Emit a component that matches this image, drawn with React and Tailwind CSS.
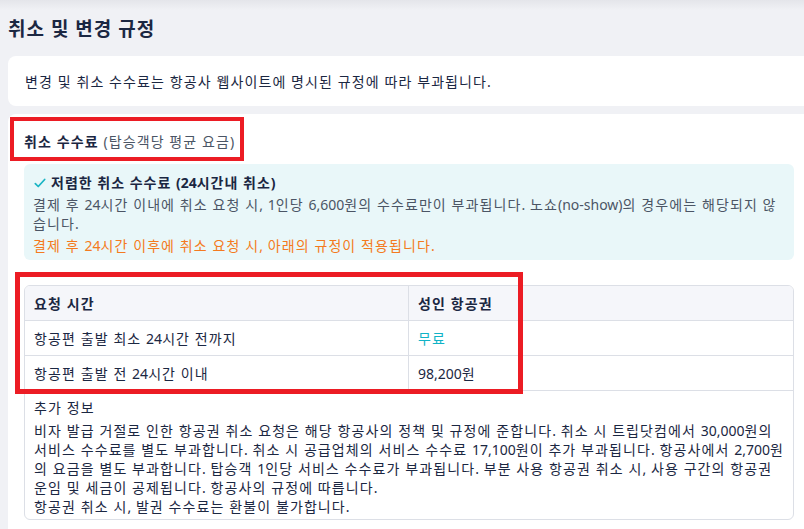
const font = { fontFamily: '"Noto Sans", "Noto Sans CJK KR", sans-serif' };

// 한글만 자간을 넓히고, 숫자/영문은 기본 자간 유지
function T({ children }) {
  const parts = children.split(/([0-9A-Za-z,().\-]+)/);
  return parts.map((part, i) =>
    i % 2 ? (
      <span key={i} className="tracking-normal">
        {part}
      </span>
    ) : (
      part
    ),
  );
}

export default function App() {
  const cell = 'flex h-[34px] items-center px-[9px]';
  return (
    <div className="relative h-[529px] w-[804px] overflow-hidden bg-[#f0f1f5] text-[#1b2742]" style={font}>
      <div className="h-[10px] bg-gradient-to-b from-[#e4e5ea] to-[#f0f1f5]" />
      <h2 className="ml-2 mt-[6px] text-[19px] font-bold leading-[26px] tracking-[1px]">취소 및 변경 규정</h2>
      <div className="ml-2 mt-[14px] flex h-[50px] items-center rounded-l-lg bg-white pl-[17px] text-[14px] tracking-[1.1px]">
        변경 및 취소 수수료는 항공사 웹사이트에 명시된 규정에 따라 부과됩니다.
      </div>
      <section className="ml-2 mt-2 h-full rounded-tl-lg bg-white pr-[10px] pl-4 text-[14px] tracking-[1.1px]">
        <div className="pt-[18px] leading-[20px]">
          <span className="font-bold">취소 수수료</span>{' '}
          <span className="text-[#4b5565]">(탑승객당 평균 요금)</span>
        </div>
        <div className="mt-[12px] rounded-md bg-[#e9f7f9] px-[9px] pt-[9px] pb-[5px] leading-[19px]">
          <div className="flex items-center gap-[4px] font-bold tracking-[1px]">
            <svg width="14" height="14" viewBox="0 0 24 24" fill="none" stroke="#1bb5c4" strokeWidth="3" strokeLinecap="round" strokeLinejoin="round">
              <path d="M4 13l5 5L20 6" />
            </svg>
            <span>
              <T>저렴한 취소 수수료 (24시간내 취소)</T>
            </span>
          </div>
          <p className="mt-[3px] text-[#4b5565]">
            <T>결제 후 24시간 이내에 취소 요청 시, 1인당 6,600원의 수수료만이 부과됩니다. 노쇼(no-show)의 경우에는 해당되지 않습니다.</T>
          </p>
          <p className="mt-[3px] text-[#f47a20]">
            <T>결제 후 24시간 이후에 취소 요청 시, 아래의 규정이 적용됩니다.</T>
          </p>
        </div>
        <div className="mt-[25px] overflow-hidden rounded-md border border-[#dcdfe6]">
          <div className="grid grid-cols-[384px_1fr] bg-[#f5f6fa] font-bold">
            <div className={`${cell} border-r border-[#dcdfe6]`}>요청 시간</div>
            <div className={cell}>성인 항공권</div>
          </div>
          <div className="grid grid-cols-[384px_1fr] border-t border-[#dcdfe6]">
            <div className={`${cell} border-r border-[#dcdfe6]`}>
              <span>
                <T>항공편 출발 최소 24시간 전까지</T>
              </span>
            </div>
            <div className={`${cell} text-[#10b3c6]`}>무료</div>
          </div>
          <div className="grid grid-cols-[384px_1fr] border-t border-[#dcdfe6]">
            <div className={`${cell} border-r border-[#dcdfe6]`}>
              <span>
                <T>항공편 출발 전 24시간 이내</T>
              </span>
            </div>
            <div className={cell}>
              <span>
                <T>98,200원</T>
              </span>
            </div>
          </div>
          <div className="border-t border-[#dcdfe6] px-[9px] pt-[7px] pb-[3px] leading-[19px]">
            <div>추가 정보</div>
            <p className="mt-[4px]">
              <T>
                비자 발급 거절로 인한 항공권 취소 요청은 해당 항공사의 정책 및 규정에 준합니다. 취소 시 트립닷컴에서 30,000원의 서비스 수수료를 별도 부과합니다. 취소 시 공급업체의 서비스 수수료 17,100원이 추가 부과됩니다. 항공사에서 2,700원의 요금을 별도 부과합니다. 탑승객 1인당 서비스 수수료가 부과됩니다. 부분 사용 항공권 취소 시, 사용 구간의 항공권 운임 및 세금이 공제됩니다. 항공사의 규정에 따릅니다.
              </T>
            </p>
            <p>
              <T>항공권 취소 시, 발권 수수료는 환불이 불가합니다.</T>
            </p>
          </div>
        </div>
      </section>
      <div className="pointer-events-none absolute left-[10px] top-[117px] h-[44px] w-[234px] border-4 border-[#ec1c24]" />
      <div className="pointer-events-none absolute left-[15px] top-[272px] h-[122px] w-[508px] border-[5px] border-[#ec1c24]" />
    </div>
  );
}
